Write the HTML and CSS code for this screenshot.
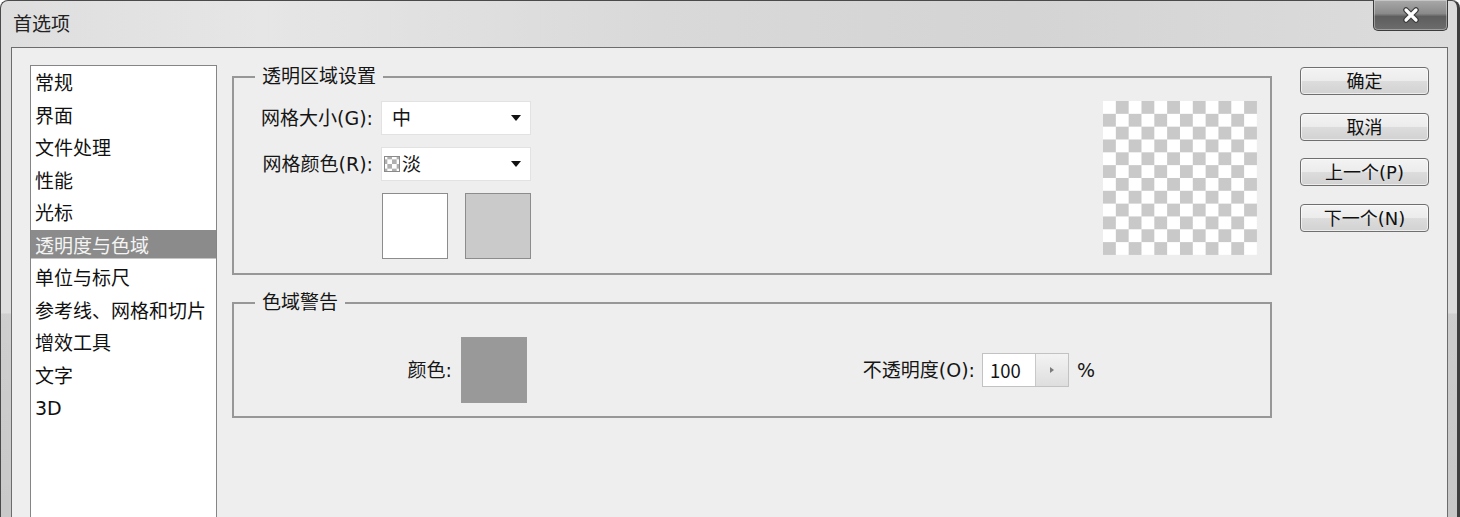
FILE: index.html
```html
<!DOCTYPE html>
<html lang="zh-CN">
<head>
<meta charset="utf-8">
<title>首选项</title>
<link rel="stylesheet" href="styles.css">
</head>
<body>
<div class="window">
  <div class="titlebar">
    <div class="title">首选项</div>
    <div class="close">
      <svg width="20" height="16" viewBox="0 0 20 16">
        <path d="M5 3 L15 13 M15 3 L5 13" stroke="#3a3a3a" stroke-width="5.5" stroke-linecap="round"/>
        <path d="M5 3 L15 13 M15 3 L5 13" stroke="#ffffff" stroke-width="3.2" stroke-linecap="round"/>
      </svg>
    </div>
  </div>
  <div class="client">
    <ul class="nav">
      <li>常规</li>
      <li>界面</li>
      <li>文件处理</li>
      <li>性能</li>
      <li>光标</li>
      <li class="selected">透明度与色域</li>
      <li>单位与标尺</li>
      <li>参考线、网格和切片</li>
      <li>增效工具</li>
      <li>文字</li>
      <li>3D</li>
    </ul>
    <div class="main">
      <fieldset class="group group-trans">
        <legend>透明区域设置</legend>
        <div class="trans-body">
          <div class="trans-grid">
            <label class="lbl">网格大小(G):</label>
            <div class="select"><span class="sel-text">中</span><i class="arrow"></i></div>
            <label class="lbl">网格颜色(R):</label>
            <div class="select select-icon"><span class="chk-icon"></span><span class="sel-text">淡</span><i class="arrow"></i></div>
            <span></span>
            <div class="swatches">
              <div class="sw sw-white"></div>
              <div class="sw sw-gray"></div>
            </div>
          </div>
          <div class="preview"></div>
        </div>
      </fieldset>
      <fieldset class="group group-gamut">
        <legend>色域警告</legend>
        <div class="gamut-body">
          <label class="lbl lbl-color">颜色:</label>
          <div class="sw sw-warn"></div>
          <label class="lbl lbl-opacity">不透明度(O):</label>
          <div class="num">
            <span class="num-val">100</span>
            <span class="spin"><i class="spin-arrow"></i></span>
          </div>
          <span class="pct">%</span>
        </div>
      </fieldset>
    </div>
    <div class="buttons">
      <button class="btn">确定</button>
      <button class="btn">取消</button>
      <button class="btn">上一个(P)</button>
      <button class="btn">下一个(N)</button>
    </div>
  </div>
</div>
</body>
</html>
```

FILE: styles.css
```css
html, body {
  margin: 0;
  padding: 0;
  width: 1460px;
  height: 517px;
  overflow: hidden;
  background: #ffffff;
}

body {
  font-family: "DejaVu Sans", "Noto Sans CJK SC", sans-serif;
  font-size: 19px;
  color: #151515;
}

.window {
  box-sizing: border-box;
  width: 1460px;
  height: 560px;
  border-top: 1px solid #4a4a4a;
  border-left: 1px solid #4a4a4a;
  border-right: 3px solid #3e3e3e;
  border-radius: 8px 8px 0 0;
  padding: 0 9px 0 10px;
  display: flex;
  flex-direction: column;
  background:
    linear-gradient(to bottom, rgba(0,0,0,0) 0, rgba(0,0,0,0) 312px, rgba(0,0,0,0.07) 313px, rgba(0,0,0,0.1) 100%),
    linear-gradient(to right, #dedede 0, #e6e6e6 18%, #d9d9d9 45%, #d4d4d4 70%, #dcdcdc 100%);
}

.titlebar {
  height: 46px;
  flex: none;
  display: flex;
  align-items: flex-start;
  justify-content: space-between;
}

.title {
  padding: 9px 0 0 2px;
  font-size: 19px;
  line-height: 28px;
  color: #222;
}

.close {
  box-sizing: border-box;
  width: 75px;
  height: 31px;
  margin-top: -1px;
  border: 1px solid #3c3c3c;
  border-top: none;
  border-radius: 0 0 5px 5px;
  background: linear-gradient(to bottom, #a9a9a9 0, #8a8a8a 45%, #5e5e5e 55%, #6c6c6c 100%);
  box-shadow: inset 0 0 0 1px rgba(255,255,255,0.35);
  display: flex;
  align-items: center;
  justify-content: center;
}

.client {
  flex: 1;
  display: flex;
  align-items: flex-start;
  border: 1px solid #6c6c6c;
  border-bottom: none;
  background: #eeeeee;
  padding: 17px 0 0 18px;
}

.nav {
  box-sizing: border-box;
  width: 187px;
  height: 520px;
  flex: none;
  margin: 0;
  padding: 1px 0 0 0;
  list-style: none;
  background: #ffffff;
  border: 1px solid #858585;
}

.nav li {
  height: 32.5px;
  line-height: 32px;
  padding-left: 4px;
  white-space: nowrap;
  color: #111;
}

.nav li.selected {
  color: #f4f4f4;
  background: linear-gradient(#8b8b8b, #8b8b8b) no-repeat 0 0.5px / 100% 28.5px;
}

.main {
  width: 1040px;
  flex: none;
  margin-left: 15px;
}

.group {
  margin: 0;
  padding: 0;
  border: 2px solid #979797;
  min-inline-size: auto;
}

.group legend {
  margin-left: 21px;
  padding: 0 7px;
  font-size: 19px;
  line-height: 23px;
}

.group-gamut {
  margin-top: 16px;
}

.trans-body {
  display: flex;
  justify-content: space-between;
  align-items: flex-start;
  padding: 13px 13px 14px 19px;
}

.trans-grid {
  display: grid;
  grid-template-columns: 120px 150px;
  grid-template-rows: 34px 34px 66px;
  column-gap: 8px;
  row-gap: 12px;
  align-items: center;
}

.lbl {
  text-align: right;
  white-space: nowrap;
  line-height: 26px;
}

.select {
  box-sizing: border-box;
  height: 34px;
  display: flex;
  align-items: center;
  padding: 0 9px 0 10px;
  background: #ffffff;
  border: 1px solid #e2e2e2;
}

.select-icon {
  padding-left: 2px;
}

.sel-text {
  line-height: 26px;
}

.arrow {
  margin-left: auto;
  width: 0;
  height: 0;
  border-left: 5.5px solid transparent;
  border-right: 5.5px solid transparent;
  border-top: 6px solid #111;
}

.chk-icon {
  box-sizing: border-box;
  width: 16px;
  height: 16px;
  margin-right: 2px;
  border: 1px solid #8a8a8a;
  background-color: #fff;
  background-image: conic-gradient(#b0b0b0 0 25%, #ffffff 0 50%, #b0b0b0 0 75%, #ffffff 0);
  background-size: 9.3px 9.3px;
  background-position: -2.3px -2.3px;
}

.swatches {
  display: flex;
  gap: 17px;
  margin-left: 1px;
  align-self: stretch;
}

.sw {
  box-sizing: border-box;
  width: 66px;
  height: 66px;
  border: 1px solid #8c8c8c;
  flex: none;
}

.sw-white {
  background: #ffffff;
}

.sw-gray {
  background: #cacaca;
}

.sw-warn {
  background: #999999;
  border-color: #9a9a9a;
}

.preview {
  width: 154px;
  height: 154px;
  background-color: #ffffff;
  background-image: conic-gradient(#c9c9c9 0 25%, #ffffff 0 50%, #c9c9c9 0 75%, #ffffff 0);
  background-size: 25.6667px 25.6667px;
}

.gamut-body {
  display: flex;
  align-items: center;
  padding: 23px 0 13px 158px;
}

.lbl-color {
  width: 60px;
  margin-right: 9px;
}

.lbl-opacity {
  width: 130px;
  margin-left: 318px;
  margin-right: 7px;
}

.num {
  box-sizing: border-box;
  width: 87px;
  height: 34px;
  display: flex;
  border: 1px solid #c2c2c2;
  background: #ffffff;
}

.num-val {
  flex: 1;
  padding-left: 7px;
  line-height: 33px;
  font-family: "Noto Sans CJK SC", sans-serif;
  font-size: 18.5px;
}

.spin {
  width: 32px;
  border-left: 1px solid #c8c8c8;
  background: linear-gradient(to bottom, #f3f3f3, #dedede);
  display: flex;
  align-items: center;
  justify-content: center;
}

.spin-arrow {
  width: 0;
  height: 0;
  border-top: 3px solid transparent;
  border-bottom: 3px solid transparent;
  border-left: 4px solid #7a7a7a;
}

.pct {
  margin-left: 8px;
  line-height: 26px;
}

.buttons {
  width: 129px;
  flex: none;
  margin: 2px 0 0 28px;
  display: flex;
  flex-direction: column;
  gap: 17.67px;
}

.btn {
  box-sizing: border-box;
  height: 28px;
  padding: 2px 0 0 0;
  font-family: "DejaVu Sans", "Noto Sans CJK SC", sans-serif;
  font-size: 18px;
  line-height: 24px;
  color: #111;
  border: 1px solid #6f6f6f;
  border-radius: 4px;
  background: linear-gradient(to bottom, #f3f3f3 0, #ececec 48%, #dcdcdc 52%, #d2d2d2 100%);
  box-shadow: inset 0 0 0 1px rgba(255,255,255,0.6);
}
```
